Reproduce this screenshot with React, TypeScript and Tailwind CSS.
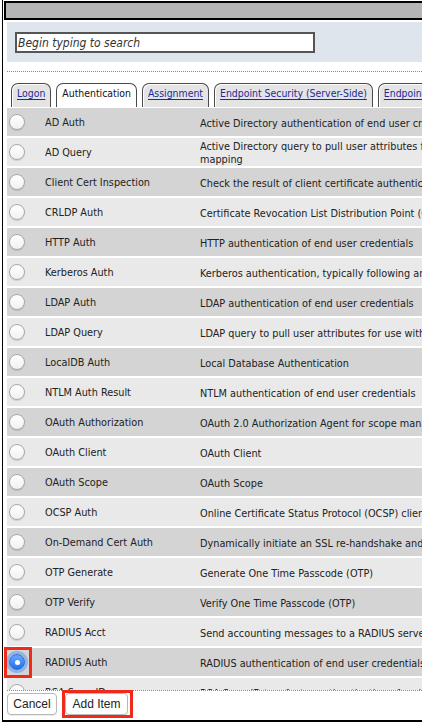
import React from "react";

type Item = { name: string; desc: string[] };

const items: Item[] = [
  { name: "AD Auth", desc: ["Active Directory authentication of end user credentials"] },
  {
    name: "AD Query",
    desc: [
      "Active Directory query to pull user attributes for use with resource assignment and/or",
      "mapping",
    ],
  },
  { name: "Client Cert Inspection", desc: ["Check the result of client certificate authentication by the Client SSL profile"] },
  { name: "CRLDP Auth", desc: ["Certificate Revocation List Distribution Point (CRLDP) client certificate revocation status check"] },
  { name: "HTTP Auth", desc: ["HTTP authentication of end user credentials"] },
  { name: "Kerberos Auth", desc: ["Kerberos authentication, typically following an HTTP 401 Response action"] },
  { name: "LDAP Auth", desc: ["LDAP authentication of end user credentials"] },
  { name: "LDAP Query", desc: ["LDAP query to pull user attributes for use with resource assignment"] },
  { name: "LocalDB Auth", desc: ["Local Database Authentication"] },
  { name: "NTLM Auth Result", desc: ["NTLM authentication of end user credentials"] },
  { name: "OAuth Authorization", desc: ["OAuth 2.0 Authorization Agent for scope management"] },
  { name: "OAuth Client", desc: ["OAuth Client"] },
  { name: "OAuth Scope", desc: ["OAuth Scope"] },
  { name: "OCSP Auth", desc: ["Online Certificate Status Protocol (OCSP) client certificate revocation status check"] },
  { name: "On-Demand Cert Auth", desc: ["Dynamically initiate an SSL re-handshake and validate the received client certificate"] },
  { name: "OTP Generate", desc: ["Generate One Time Passcode (OTP)"] },
  { name: "OTP Verify", desc: ["Verify One Time Passcode (OTP)"] },
  { name: "RADIUS Acct", desc: ["Send accounting messages to a RADIUS server"] },
  { name: "RADIUS Auth", desc: ["RADIUS authentication of end user credentials"] },
  { name: "RSA SecurID", desc: ["RSA SecurID two-factor authentication of end user credentials"] },
];

const SELECTED = "RADIUS Auth";

function Radio({ checked }: { checked: boolean }) {
  if (checked) {
    return (
      <span className="flex h-[16px] w-[16px] items-center justify-center rounded-full border border-[#2a6fd6] bg-gradient-to-b from-[#69a8ff] to-[#1f6ff0] shadow-[0_0_0_3px_rgba(90,150,240,0.55)]">
        <span className="h-[5px] w-[5px] rounded-full bg-white" />
      </span>
    );
  }
  return (
    <span className="block h-[16px] w-[16px] rounded-full border border-[#a8a8a8] bg-gradient-to-b from-white to-[#f1f1f1] shadow-[0_1px_1px_rgba(0,0,0,0.12)]" />
  );
}

const tabs = [
  { label: "Logon", active: false },
  { label: "Authentication", active: true },
  { label: "Assignment", active: false },
  { label: "Endpoint Security (Server-Side)", active: false },
  { label: "Endpoint Security (Client-Side)", active: false },
];

export default function App() {
  return (
    <div
      className="h-[723px] w-[422px] overflow-hidden bg-white text-[10.8px] text-[#222]"
      style={{ fontFamily: '"DejaVu Sans Condensed", "Liberation Sans", sans-serif' }}
    >
      <div className="ml-[2px] flex h-[722px] w-[440px] flex-col border-b-2 border-l border-black">
        {/* title bar */}
        <div className="ml-[1px] mt-[1px] h-[19px] w-[440px] shrink-0 border-2 border-black bg-[#b5b5b5]" />

        {/* search panel */}
        <div className="ml-[4px] mt-[2px] h-[40px] shrink-0 bg-[#dfe5ec] pl-[8px] pt-[10px]">
          <div className="flex h-[21px] w-[300px] items-center border-2 border-[#555] bg-white pl-[1px] text-[12px] italic text-[#333]">
            Begin typing to search
          </div>
        </div>

        <div className="ml-[4px] mt-[9px] shrink-0 border-t border-dotted border-[#8a8a8a]" />

        {/* tabs */}
        <div className="ml-[8px] mt-[11px] flex h-[24px] shrink-0 gap-[5px] text-[10.4px]">
          {tabs.map((t) => (
            <div
              key={t.label}
              className={
                t.active
                  ? "flex shrink-0 items-center whitespace-nowrap rounded-t-[7px] border border-b-0 border-[#4a4a4a] bg-white px-[5px] pb-[3px] text-[#111]"
                  : "flex shrink-0 items-center whitespace-nowrap rounded-t-[7px] border border-b-0 border-[#4a4a4a] bg-[#e4e4e4] px-[5px] pb-[3px] shadow-[inset_1px_1px_0_#fff]"
              }
            >
              {t.active ? (
                t.label
              ) : (
                <span className="text-[#1b2a9c] underline underline-offset-[2px]">{t.label}</span>
              )}
            </div>
          ))}
        </div>

        {/* list of items */}
        <div className="mt-[1px] h-[582px] shrink-0 overflow-hidden pl-[4px]">
          <div className="flex w-[640px] flex-col gap-[2px]">
            {items.map((it, i) => {
              const checked = it.name === SELECTED;
              return (
                <div
                  key={it.name}
                  className={
                    (i % 2 === 0 ? "bg-[#d4d4d4]" : "bg-[#e9e9e9]") +
                    " relative flex h-[28px] shrink-0 items-center"
                  }
                >
                  <div className="flex w-[38px] shrink-0 items-center pl-[2px]">
                    <Radio checked={checked} />
                  </div>
                  <div className="w-[155px] shrink-0 whitespace-nowrap pt-[2px]">{it.name}</div>
                  <div className="flex flex-col whitespace-nowrap pt-[2px] leading-[13px]">
                    {it.desc.map((d) => (
                      <span key={d}>{d}</span>
                    ))}
                  </div>
                  {checked && (
                    <div className="pointer-events-none absolute left-[-3px] top-[-1px] h-[31px] w-[28px] border-[3px] border-[#ee2b1b]" />
                  )}
                </div>
              );
            })}
          </div>
        </div>

        {/* footer */}
        <div className="ml-[4px] shrink-0 border-t border-dotted border-[#8a8a8a]" />
        <div
          className="ml-[4px] mt-[2px] flex gap-[8px] text-[12px] text-[#222]"
          style={{ fontFamily: '"Liberation Sans", Arial, sans-serif' }}
        >
          <button className="h-[22px] w-[50px] rounded-[4px] border border-[#b9b9b9] bg-white shadow-[0_1px_0_rgba(0,0,0,0.08)]">
            Cancel
          </button>
          <div className="relative">
            <button className="h-[22px] w-[63px] rounded-[4px] border border-[#b9b9b9] bg-white shadow-[0_1px_0_rgba(0,0,0,0.08)]">
              Add Item
            </button>
            <div className="pointer-events-none absolute bottom-[-3px] left-[-3px] right-[-5px] top-[-3px] border-[3px] border-[#ee2b1b]" />
          </div>
        </div>
      </div>
    </div>
  );
}
